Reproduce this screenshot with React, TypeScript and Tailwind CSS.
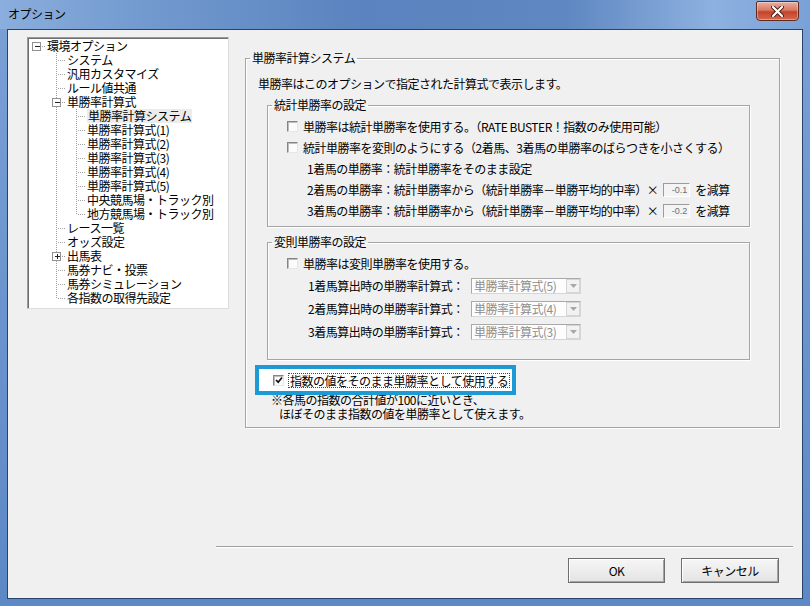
import React from 'react';

type TreeRow = {
  label: string;
  depth: number;
  box?: 'minus' | 'plus';
  last?: boolean;
  selected?: boolean;
};

const treeRows: TreeRow[] = [
  { label: '環境オプション', depth: 0, box: 'minus' },
  { label: 'システム', depth: 1 },
  { label: '汎用カスタマイズ', depth: 1 },
  { label: 'ルール値共通', depth: 1 },
  { label: '単勝率計算式', depth: 1, box: 'minus' },
  { label: '単勝率計算システム', depth: 2, selected: true },
  { label: '単勝率計算式(1)', depth: 2 },
  { label: '単勝率計算式(2)', depth: 2 },
  { label: '単勝率計算式(3)', depth: 2 },
  { label: '単勝率計算式(4)', depth: 2 },
  { label: '単勝率計算式(5)', depth: 2 },
  { label: '中央競馬場・トラック別', depth: 2 },
  { label: '地方競馬場・トラック別', depth: 2, last: true },
  { label: 'レース一覧', depth: 1 },
  { label: 'オッズ設定', depth: 1 },
  { label: '出馬表', depth: 1, box: 'plus' },
  { label: '馬券ナビ・投票', depth: 1 },
  { label: '馬券シミュレーション', depth: 1 },
  { label: '各指数の取得先設定', depth: 1, last: true },
];

const DOT = '#a0a0a0';

// one indent column of the tree, with its dotted guide lines
function Guide({ first, through, own, last, box }: { first?: boolean; through?: boolean; own?: boolean; last?: boolean; box?: 'minus' | 'plus' }) {
  const w = first ? 18 : 20;
  const cx = first ? 8.5 : 10.5;
  const isRoot = first && own;
  return (
    <svg width={w} height={14} className="shrink-0" shapeRendering="crispEdges">
      {through && <line x1={cx} y1={0} x2={cx} y2={14} stroke={DOT} strokeDasharray="1 1" />}
      {own && !isRoot && <line x1={cx} y1={0} x2={cx} y2={last ? 8 : 14} stroke={DOT} strokeDasharray="1 1" />}
      {own && <line x1={cx + 1} y1={7.5} x2={w} y2={7.5} stroke={DOT} strokeDasharray="1 1" />}
      {box && (
        <g>
          <rect x={cx - 4} y={3.5} width={8} height={8} fill="#fff" stroke="#919191" />
          <line x1={cx - 2} y1={7.5} x2={cx + 3} y2={7.5} stroke="#222" />
          {box === 'plus' && <line x1={cx + 0.5} y1={5} x2={cx + 0.5} y2={10} stroke="#222" />}
        </g>
      )}
    </svg>
  );
}

function TreeView() {
  return (
    <div className="h-[272px] w-[202px] shrink-0 border border-t-[#9a9a9a] border-l-[#9a9a9a] border-b-[#dcdcdc] border-r-[#dcdcdc] bg-white pt-[1px] shadow-[inset_1px_1px_0_#6e6e6e]">
      {treeRows.map((r) => (
        <div key={r.label} className="flex h-[14px] items-center whitespace-nowrap">
          {Array.from({ length: r.depth + 1 }).map((_, k) => (
            <Guide
              key={k}
              first={k === 0}
              own={k === r.depth}
              through={k === 1 && r.depth === 2}
              last={r.last}
              box={k === r.depth ? r.box : undefined}
            />
          ))}
          <span className={r.selected ? 'ml-[1px] bg-[#ececec] px-[1px]' : 'ml-[1px]'}>{r.label}</span>
        </div>
      ))}
    </div>
  );
}

function CheckBox({ checked }: { checked?: boolean }) {
  return (
    <span className="flex h-[11px] w-[11px] shrink-0 items-center justify-center border border-t-[#858585] border-l-[#858585] border-b-[#e6e6e6] border-r-[#e6e6e6] bg-[#fbfbfb] shadow-[inset_1px_1px_0_#bdbdbd]">
      {checked && (
        <svg width="8" height="8" viewBox="0 0 8 8">
          <path d="M1 4 L3.2 6.2 L7 1.5" fill="none" stroke="#111" strokeWidth="1.7" />
        </svg>
      )}
    </span>
  );
}

function NumBox({ value }: { value: string }) {
  return (
    <span className="flex h-[14px] w-[27px] shrink-0 items-center justify-end border border-t-[#9c9c9c] border-l-[#9c9c9c] border-b-white border-r-white bg-[#f4f4f4] pr-[2px] font-['Liberation_Sans',sans-serif] text-[9px] leading-[12px] tracking-normal text-[#6e6e6e]">
      {value}
    </span>
  );
}

function Combo({ value }: { value: string }) {
  return (
    <div className="flex h-[16px] w-[110px] items-stretch border border-t-[#a9a9a9] border-l-[#a9a9a9] border-b-[#d6d6d6] border-r-[#d6d6d6] bg-[#fdfdfd]">
      <span className="flex-1 pl-[2px] leading-[14px] text-[#8e8e8e]">{value}</span>
      <span className="flex w-[14px] items-center justify-center border border-[#d4d4d4] bg-[#f2f2f2]">
        <svg width="7" height="4" viewBox="0 0 7 4">
          <path d="M0 0 H7 L3.5 4 Z" fill="#a8a8a8" />
        </svg>
      </span>
    </div>
  );
}

function Group({ title, className, children }: { title: string; className: string; children: React.ReactNode }) {
  return (
    <fieldset className={`border border-[#a5a5a5] shadow-[1px_1px_0_#fff,inset_1px_1px_0_#fff] ${className}`}>
      <legend className="ml-[4px] px-[2px] leading-[14px]">{title}</legend>
      {children}
    </fieldset>
  );
}

function WinButton({ label, w }: { label: string; w: string }) {
  return (
    <button className={`h-[25px] ${w} border border-[#6f6f6f] bg-[linear-gradient(180deg,#f6f6f6,#e4e4e4)] shadow-[inset_1px_1px_0_#fff,inset_-1px_-1px_0_#a3a3a3] text-[12px]`}>
      {label}
    </button>
  );
}

export default function App() {
  return (
    <div className="flex h-[606px] w-[810px] flex-col overflow-hidden bg-[linear-gradient(180deg,#7aa1d6,#5c88c6)] font-['Noto_Sans_CJK_JP',sans-serif] text-[12px] leading-[14px] tracking-[-0.5px] text-black">
      {/* title bar */}
      <div className="flex h-[29px] shrink-0 items-start justify-between bg-[linear-gradient(90deg,#8aaedd_0%,#729acf_18%,#5a83bf_45%,#5f87c1_70%,#8db1e0_88%,#7aa1d6_100%)] pl-[8px] pr-[11px]">
        <span className="mt-[7px] text-[12px]">オプション</span>
        <div className="mt-[1px] flex h-[20px] w-[43px] items-center justify-center rounded-b-[4px] rounded-t-[2px] border border-[#5e2a22] bg-[linear-gradient(180deg,#eab0a2_0%,#d67a63_45%,#c2432b_55%,#d8694d_100%)] shadow-[inset_0_0_0_1px_rgba(255,255,255,0.35)]">
          <svg width="13" height="11" viewBox="0 0 13 11">
            <path d="M2 1 L11 10 M11 1 L2 10" stroke="#4a1a12" strokeWidth="4" strokeLinecap="round" />
            <path d="M2 1 L11 10 M11 1 L2 10" stroke="#fff" strokeWidth="2.2" strokeLinecap="round" />
          </svg>
        </div>
      </div>

      {/* client area */}
      <div className="mx-[7px] mb-[7px] flex flex-1 flex-col border border-[#2a4467] bg-[#f0f0f0]">
        <div className="flex items-start pl-[19px] pt-[7px]">
          <TreeView />

          <Group title="単勝率計算システム" className="ml-[16px] mt-[14px] w-[535px]">
            <div className="pb-[6px]">
              <p className="mt-[12px] pl-[12px]">単勝率はこのオプションで指定された計算式で表示します。</p>

              <Group title="統計単勝率の設定" className="ml-[21px] mt-[7px] w-[483px]">
                <div className="pb-[5px] pt-[4px]">
                  <div className="flex h-[21px] items-center gap-[5px] pl-[19px]">
                    <CheckBox />
                    <span>単勝率は統計単勝率を使用する。（RATE BUSTER！指数のみ使用可能）</span>
                  </div>
                  <div className="flex h-[21px] items-center gap-[5px] pl-[19px]">
                    <CheckBox />
                    <span>統計単勝率を変則のようにする（2着馬、3着馬の単勝率のばらつきを小さくする）</span>
                  </div>
                  <div className="flex h-[21px] items-center pl-[39px]">1着馬の単勝率：統計単勝率をそのまま設定</div>
                  <div className="flex h-[21px] items-center gap-[5px] pl-[39px]">
                    <span>2着馬の単勝率：統計単勝率から（統計単勝率－単勝平均的中率）×</span>
                    <NumBox value="-0.1" />
                    <span>を減算</span>
                  </div>
                  <div className="flex h-[21px] items-center gap-[5px] pl-[39px]">
                    <span>3着馬の単勝率：統計単勝率から（統計単勝率－単勝平均的中率）×</span>
                    <NumBox value="-0.2" />
                    <span>を減算</span>
                  </div>
                </div>
              </Group>

              <Group title="変則単勝率の設定" className="ml-[21px] mt-[8px] w-[483px]">
                <div className="pb-[16px] pt-[4px]">
                  <div className="flex h-[21px] items-center gap-[5px] pl-[19px]">
                    <CheckBox />
                    <span>単勝率は変則単勝率を使用する。</span>
                  </div>
                  {[
                    ['1着馬算出時の単勝率計算式：', '単勝率計算式(5)'],
                    ['2着馬算出時の単勝率計算式：', '単勝率計算式(4)'],
                    ['3着馬算出時の単勝率計算式：', '単勝率計算式(3)'],
                  ].map(([label, value]) => (
                    <div key={label} className="flex h-[23px] items-center pl-[40px]">
                      <span className="w-[163px]">{label}</span>
                      <Combo value={value} />
                    </div>
                  ))}
                </div>
              </Group>

              {/* highlighted checkbox */}
              <div className="relative mt-[13px] flex h-[14px] items-center pl-[27px]">
                <div className="absolute left-[9px] top-[-8px] h-[30px] w-[261px] border-[4px] border-[#1b9ad6] bg-white" />
                <div className="relative z-10 flex items-center gap-[4px]">
                  <CheckBox checked />
                  <span className="border border-dotted border-[#444] px-[1px] leading-[13px]">指数の値をそのまま単勝率として使用する</span>
                </div>
              </div>
              <p className="mt-[6px] pl-[25px]">※各馬の指数の合計値が100に近いとき、</p>
              <p className="pl-[33px]">ほぼそのまま指数の値を単勝率として使えます。</p>
            </div>
          </Group>
        </div>

        <div className="ml-[208px] mr-[9px] mt-auto h-[2px] border-b border-t border-b-white border-t-[#a0a0a0]" />
        <div className="mt-[10px] flex justify-end gap-[16px] pb-[15px] pr-[23px]">
          <WinButton label="OK" w="w-[97px]" />
          <WinButton label="キャンセル" w="w-[98px]" />
        </div>
      </div>
    </div>
  );
}
